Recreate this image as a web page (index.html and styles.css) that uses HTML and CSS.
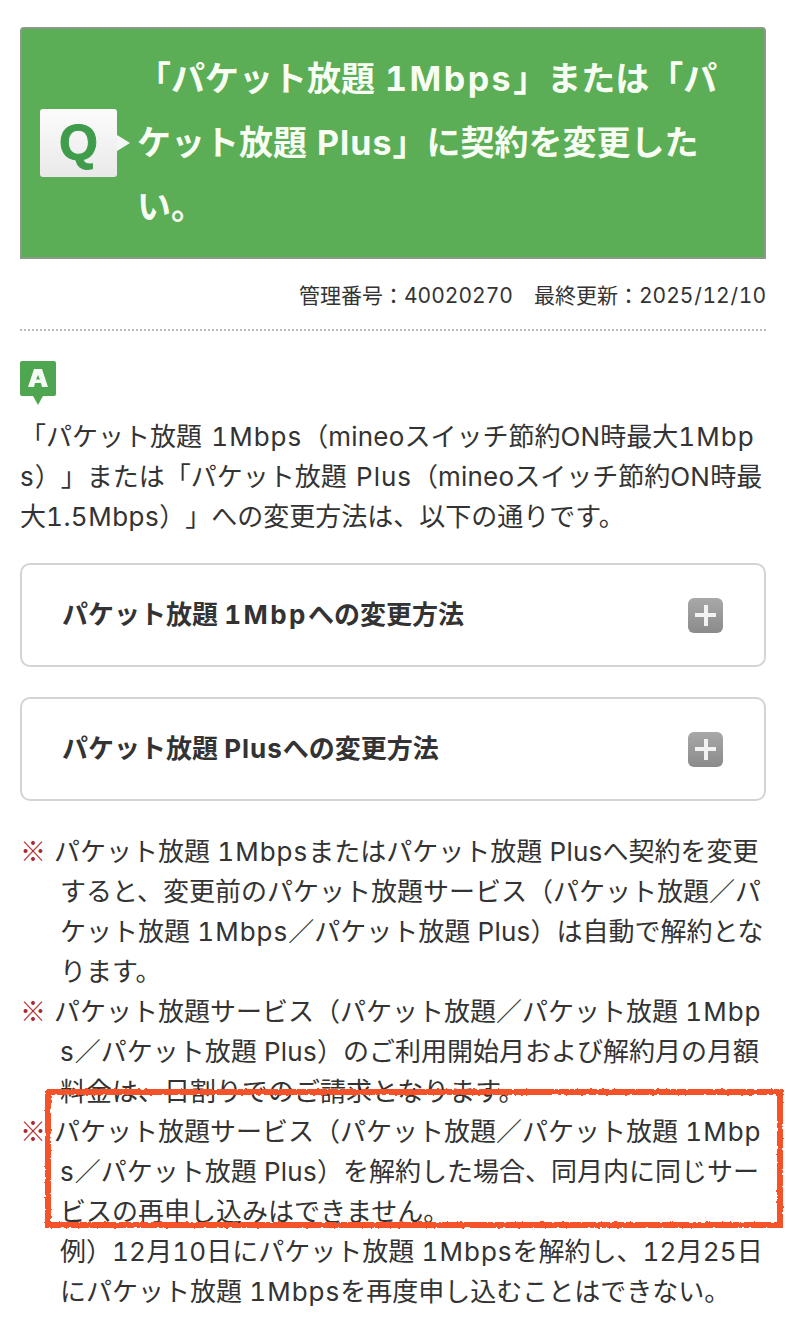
FILE: index.html
```html
<!DOCTYPE html>
<html lang="ja">
<head>
<meta charset="utf-8">
<title>FAQ</title>
<link rel="stylesheet" href="styles.css">
</head>
<body>
<main class="page">
  <header class="question">
    <div class="q-badge"><span class="q-letter">Q</span></div>
    <h1 class="q-text">「パケット放題 <span class="en wide">1Mbps</span>」または「パ<br>ケット放題 <span class="en">Plus</span>」に契約を変更した<br>い。</h1>
  </header>
  <p class="meta">管理番号：<span class="en">40020270</span>　最終更新：<span class="en">2025<span class="sl">/</span>12<span class="sl">/</span>10</span></p>
  <div class="answer-badge">
    <svg width="37" height="45" viewBox="0 0 37 45">
      <path d="M2 0H34a2 2 0 0 1 2 2V33a2 2 0 0 1-2 2H23L18 44 13 35H2a2 2 0 0 1-2-2V2a2 2 0 0 1 2-2Z" fill="#4fa650"/>
      <path d="M14 8h8l6 18h-6l-1-4h-6l-1 4H8Zm4 6-2 4.500h4Z" fill="#f4f9f4"/>
    </svg>
  </div>
  <p class="lead">「パケット放題 <span class="en">1Mbps</span>（<span class="en tight">mineo</span>スイッチ節約<span class="en tight">ON</span>時最大<span class="en">1Mbp</span><br><span class="en">s</span>）」または「パケット放題 <span class="en">Plus</span>（<span class="en tight">mineo</span>スイッチ節約<span class="en tight">ON</span>時最<br>大<span class="en mid">1.5Mbps</span>）」への変更方法は、以下の通りです。</p>
  <section class="accordions">
    <div class="acc"><span>パケット放題 <span class="en wide">1Mbp</span>への変更方法</span><span class="plus"></span></div>
    <div class="acc"><span>パケット放題 <span class="en">Plus</span>への変更方法</span><span class="plus"></span></div>
  </section>
  <ul class="notes">
    <li><span class="mark">※</span>パケット放題 <span class="en">1Mbps</span>またはパケット放題 <span class="en tight">Plus</span>へ契約を変更<br>すると、変更前のパケット放題サービス（パケット放題／パ<br>ケット放題 <span class="en">1Mbps</span>／パケット放題 <span class="en tight">Plus</span>）は自動で解約とな<br>ります。</li>
    <li><span class="mark">※</span>パケット放題サービス（パケット放題／パケット放題 <span class="en">1Mbp</span><br><span class="en">s</span>／パケット放題 <span class="en tight">Plus</span>）のご利用開始月および解約月の月額<br>料金は、日割りでのご請求となります。</li>
    <li><span class="mark">※</span>パケット放題サービス（パケット放題／パケット放題 <span class="en">1Mbp</span><br><span class="en">s</span>／パケット放題 <span class="en tight">Plus</span>）を解約した場合、同月内に同じサー<br>ビスの再申し込みはできません。<br>例）<span class="en tight">12</span>月<span class="en tight">10</span>日にパケット放題 <span class="en">1Mbps</span>を解約し、<span class="en tight">12</span>月<span class="en tight">25</span>日<br>にパケット放題 <span class="en">1Mbps</span>を再度申し込むことはできない。</li>
  </ul>
</main>
<svg class="filter-defs" width="0" height="0">
  <filter id="rough" x="-2%" y="-5%" width="104%" height="110%">
    <feTurbulence type="fractalNoise" baseFrequency="0.25" numOctaves="2" seed="4"/>
    <feDisplacementMap in="SourceGraphic" scale="3"/>
  </filter>
</svg>
<div class="highlight"></div>
</body>
</html>
```
FILE: styles.css
```css
html, body {
  margin: 0;
  padding: 0;
  background: #fff;
}
body {
  font-family: Inter, "Noto Sans CJK JP", sans-serif;
  color: #333;
  position: relative;
  height: 1327px;
  overflow: hidden;
  text-spacing-trim: space-all;
}
.en {
  font-variant-numeric: tabular-nums;
  letter-spacing: 1px;
  font-feature-settings: "kern" 0;
}
.en.tight {
  letter-spacing: 0.200px;
}
.en.mid {
  letter-spacing: 0.500px;
}
.en.wide {
  letter-spacing: 2.500px;
}
.sl {
  margin: 0 0.750px;
}
.page {
  padding: 27px 20px 0;
}
.question {
  box-sizing: border-box;
  height: 232px;
  background: #5bae55;
  border: 2px solid #8a9a88;
  border-radius: 4px 4px 0 0;
  display: flex;
  align-items: center;
  padding-left: 18px;
  gap: 20px;
}
.q-badge {
  position: relative;
  width: 77px;
  height: 68px;
  flex: none;
  background: linear-gradient(#fcfcfc, #e9e9e9);
  border-radius: 3px;
  display: flex;
  align-items: center;
  justify-content: center;
}
.q-badge::after {
  content: "";
  position: absolute;
  left: 77px;
  top: 26px;
  border-left: 13px solid #f4f7f3;
  border-top: 8px solid transparent;
  border-bottom: 8px solid transparent;
}
.q-letter {
  font-family: "Liberation Sans", sans-serif;
  font-weight: 700;
  font-size: 50px;
  line-height: 1;
  color: #3f9c4b;
  -webkit-text-stroke: 1px #3f9c4b;
}
.q-text {
  margin: 0;
  color: #f8fdf4;
  font-size: 34px;
  line-height: 64px;
  font-weight: 700;
  word-spacing: 2px;
  white-space: nowrap;
}
.meta {
  margin: 0;
  padding: 21px 0 17px;
  border-bottom: 2px dotted #bbb;
  text-align: right;
  font-size: 21px;
  line-height: 32px;
  white-space: nowrap;
}
.meta .en {
  letter-spacing: 0;
}
.answer-badge {
  margin-top: 30px;
  height: 45px;
}
.answer-badge svg {
  display: block;
}
.lead {
  margin: 11px 0 0;
  font-size: 26px;
  line-height: 40px;
  word-spacing: 2px;
  white-space: nowrap;
}
.accordions {
  margin-top: 26px;
  display: flex;
  flex-direction: column;
  gap: 30px;
}
.acc {
  box-sizing: border-box;
  height: 104px;
  border: 2px solid #d4d4d4;
  border-radius: 10px;
  display: flex;
  align-items: center;
  justify-content: space-between;
  padding: 0 41px 0 40px;
  font-size: 26px;
  line-height: 40px;
  font-weight: 700;
  white-space: nowrap;
}
.plus {
  position: relative;
  width: 35px;
  height: 35px;
  border-radius: 6px;
  background: linear-gradient(#a8a8a8, #8b8b8b);
}
.plus::before,
.plus::after {
  content: "";
  position: absolute;
  background: #f2f2f2;
}
.plus::before {
  left: 7px;
  top: 15.500px;
  width: 21px;
  height: 4px;
}
.plus::after {
  left: 15.500px;
  top: 7px;
  width: 4px;
  height: 21px;
}
.notes {
  list-style: none;
  margin: 31px 0 0;
  padding: 0 0 0 40px;
  font-size: 26px;
  line-height: 40px;
  white-space: nowrap;
}
.notes li {
  text-indent: -40px;
}
.mark {
  font-family: "Noto Sans CJK JP", sans-serif;
  font-weight: 500;
  color: #a92a30;
  margin-right: 8px;
  line-height: 1;
}
.filter-defs {
  position: absolute;
}
.highlight {
  position: absolute;
  left: 45px;
  top: 1089px;
  width: 738px;
  height: 139px;
  box-sizing: border-box;
  border: 6px solid #f4532a;
  filter: url(#rough);
}
```
